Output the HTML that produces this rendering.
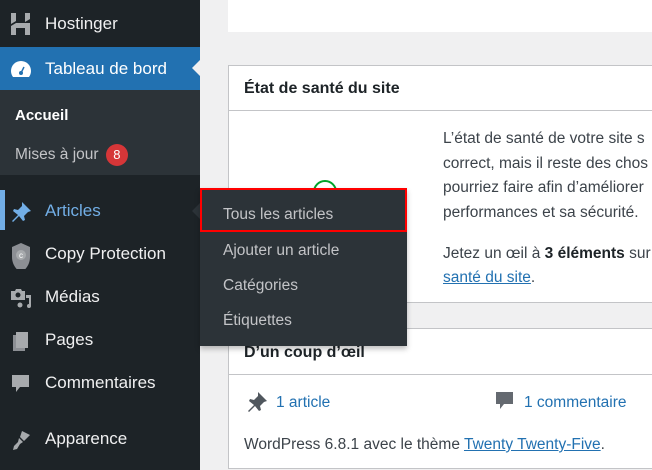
<!DOCTYPE html>
<html><head><meta charset="utf-8"><style>
*{margin:0;padding:0;box-sizing:border-box}
body{width:652px;height:470px;overflow:hidden;background:#f0f0f1;font-family:"Liberation Sans",sans-serif;position:relative}
.sb{position:absolute;left:0;top:0;width:200px;height:470px;background:#1d2327}
.it{position:absolute;left:0;width:200px;height:40px;color:#f0f0f1;font-size:17px;line-height:40px;padding-left:45px}
.ic{position:absolute;left:10px;top:10px;width:22px;height:22px}
.abs{position:absolute}
.card{position:absolute;left:228px;background:#fff;border:1px solid #c3c4c7}
.txt{font-size:15.5px;color:#3c434a;line-height:24px}
a{color:#2271b1;text-decoration:underline}
.fl{position:absolute;left:200px;top:188px;width:207px;height:158px;background:#2c3338;box-shadow:0 3px 5px rgba(0,0,0,.25)}
.fl div{position:absolute;left:23px;color:#c3c4c7;font-size:15.5px}
h3{font-size:16px;font-weight:600;color:#1d2327}
</style></head><body>
<div class="sb">
 <div class="it" style="top:4px">Hostinger
  <svg class="ic" viewBox="0 0 22 22" style="top:9px;left:10px"><path d="M1 0h5v8l-5 3zM15 0h5v6l-5 3zM1 13l5-3h14v12h-5v-7h-9v7H1z" fill="#a7aaad"/></svg></div>
 <div class="it" style="top:47px;height:43px;line-height:43px;background:#2271b1;color:#fff">Tableau de bord
  <svg class="ic" viewBox="0 0 22 22" style="top:11px"><path d="M11 3a10 10 0 0 0-10 10 10 10 0 0 0 2 6h16a10 10 0 0 0 2-6A10 10 0 0 0 11 3z" fill="#fff"/><circle cx="11" cy="15" r="2" fill="#2271b1"/><path d="M11 15l3-6" stroke="#2271b1" stroke-width="1.5"/></svg>
  <div class="abs" style="right:0;top:13px;width:0;height:0;border:8px solid transparent;border-right-color:#f0f0f1"></div></div>
 <div class="abs" style="top:90px;left:0;width:200px;height:85px;background:#2c3338"></div>
 <div class="abs" style="top:107px;left:15px;color:#fff;font-weight:bold;font-size:15px">Accueil</div>
 <div class="abs" style="top:144px;left:15px;color:#c3c4c7;font-size:15.5px">Mises à jour <span style="display:inline-block;background:#d63638;color:#fff;border-radius:11px;width:22px;height:22px;text-align:center;line-height:22px;font-size:13px;margin-left:3px">8</span></div>
 <div class="abs" style="top:190px;left:0;width:5px;height:40px;background:#72aee6"></div>
 <div class="it" style="top:191px;color:#72aee6">Articles
  <svg class="ic" viewBox="0 0 22 22"><path d="M12 1l9 9-3 1-4 4 1 4-2 1-4-5-6 6-1-1 6-6-5-4 1-2 4 1 4-4z" fill="#72aee6"/></svg>
  <div class="abs" style="right:0;top:12px;width:0;height:0;border:8px solid transparent;border-right-color:#2c3338"></div></div>
 <div class="it" style="top:234px">Copy Protection
  <svg class="ic" viewBox="0 0 22 22" style="top:5px;height:30px"><path d="M11 0l9 4v10c0 8-5 13-9 16-4-3-9-8-9-16V4z" fill="#8c8f94"/><circle cx="11" cy="12" r="5" fill="#a7aaad"/><text x="11" y="15" font-size="8" text-anchor="middle" fill="#fff">c</text></svg></div>
 <div class="it" style="top:277px">Médias
  <svg class="ic" viewBox="0 0 22 22"><path d="M1 4h4l1-2h5l1 2h3v9H1z" fill="#a7aaad"/><circle cx="8" cy="8" r="2.5" fill="#1d2327"/><path d="M16 8h5v11a2 2 0 1 1-2-2V11h-3z" fill="#a7aaad"/><circle cx="10" cy="18" r="2.5" fill="#a7aaad"/></svg></div>
 <div class="it" style="top:320px">Pages
  <svg class="ic" viewBox="0 0 22 22"><rect x="3" y="5" width="12" height="16" fill="#8c8f94"/><rect x="6" y="2" width="12" height="16" fill="#a7aaad"/></svg></div>
 <div class="it" style="top:363px">Commentaires
  <svg class="ic" viewBox="0 0 22 22"><path d="M2 2h17v12H10l-4 5v-5H2z" fill="#a7aaad"/></svg></div>
 <div class="it" style="top:419px">Apparence
  <svg class="ic" viewBox="0 0 22 22"><path d="M12 2l8 4-6 6-4-4zM9 9l4 4-3 2-3 5-4 1 1-4 4-4z" fill="#a7aaad"/></svg></div>
</div>

<div class="abs" style="left:228px;top:0;width:424px;height:32px;background:#fff"></div>

<div class="card" style="top:65px;width:430px;height:238px">
 <div class="abs" style="left:0;top:44px;width:100%;height:1px;background:#c3c4c7"></div>
 <h3 class="abs" style="left:15px;top:14px">État de santé du site</h3>
 <div class="abs" style="left:84px;top:114px;width:24px;height:24px;border:2px solid #00a32a;border-radius:50%"></div>
 <div class="abs txt" style="left:214px;top:61px;white-space:nowrap;line-height:24.5px">L’état de santé de votre site s<br>correct, mais il reste des chos<br>pourriez faire afin d’améliorer<br>performances et sa sécurité.</div>
 <div class="abs txt" style="left:214px;top:176px;white-space:nowrap">Jetez un œil à <b style="color:#1d2327">3 éléments</b> sur<br><a>santé du site</a>.</div>
</div>

<div class="card" style="top:328px;width:430px;height:141px">
 <div class="abs" style="left:0;top:45px;width:100%;height:1px;background:#c3c4c7"></div>
 <h3 class="abs" style="left:15px;top:15px">D’un coup d’œil</h3>
 <svg class="abs" style="left:17px;top:62px" width="22" height="22" viewBox="0 0 22 22"><path d="M12 1l9 9-3 1-4 4 1 4-2 1-4-5-6 6-1-1 6-6-5-4 1-2 4 1 4-4z" fill="#50575e"/></svg>
 <div class="abs txt" style="left:47px;top:62px;color:#2271b1">1 article</div>
 <svg class="abs" style="left:266px;top:62px" width="20" height="22" viewBox="0 0 20 22"><path d="M1 1h17v12H9l-4 5v-5H1z" fill="#646970"/></svg>
 <div class="abs txt" style="left:295px;top:62px;color:#2271b1">1 commentaire</div>
 <div class="abs txt" style="left:15px;top:104px;white-space:nowrap">WordPress 6.8.1 avec le thème <a>Twenty Twenty-Five</a>.</div>
</div>

<div class="fl">
 <div style="left:0;top:0;width:207px;height:44px;border:2px solid #f00"></div>
 <div style="top:18px">Tous les articles</div>
 <div style="top:54px">Ajouter un article</div>
 <div style="top:89px">Catégories</div>
 <div style="top:124px">Étiquettes</div>
</div>
</body></html>
